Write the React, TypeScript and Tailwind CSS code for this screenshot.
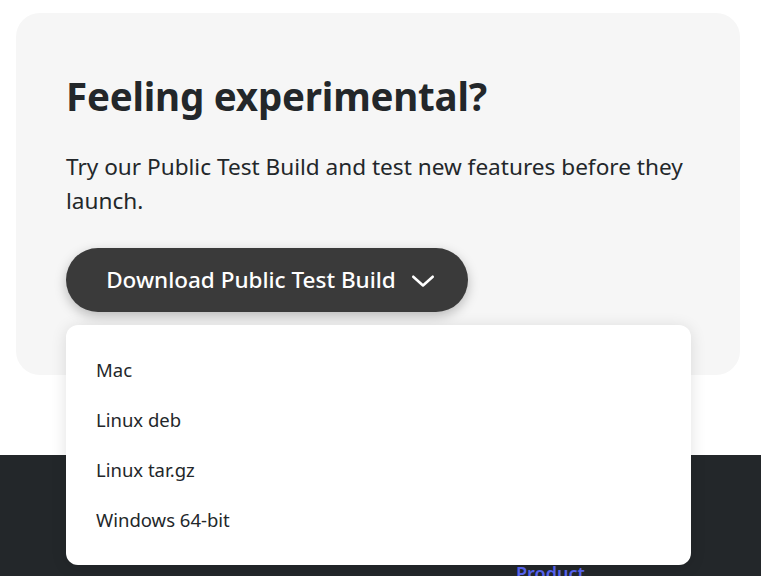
import React from 'react';

const items = ['Mac', 'Linux deb', 'Linux tar.gz', 'Windows 64-bit'];

export default function App() {
  return (
    <div className="relative min-h-[576px] bg-white overflow-hidden" style={{ fontFamily: '"Noto Sans", Inter, sans-serif' }}>
      <div className="pl-4 pr-[21px] pt-[13px]">
        <div className="h-[362px] rounded-3xl bg-[#f6f6f6] pl-[50px] pt-[57px]">
          <h2 className="text-[38.5px] font-bold leading-[52px] text-[#23272a] tracking-[-0.2px]">Feeling experimental?</h2>
          <p className="mt-[28px] text-[22.6px] leading-[34px] text-[#23272a] pr-10">
            Try our Public Test Build and test new features before they launch.
          </p>
          <div className="relative mt-[30px] w-fit">
            <button className="flex h-16 w-[402px] items-center justify-center gap-[14px] rounded-full bg-[#3a3a3a] pl-2 text-[22.5px] font-medium text-white shadow-[0_4px_12px_rgba(0,0,0,0.25)]">
              Download Public Test Build
              <svg width="26" height="26" viewBox="0 0 24 24" fill="none" stroke="white" strokeWidth="2.4" strokeLinecap="round" strokeLinejoin="round">
                <path d="M3 9l9 8 9-8" />
              </svg>
            </button>
            <div className="absolute left-0 top-[77px] z-10 w-[625px] rounded-xl bg-white py-5 shadow-[0_2px_16px_rgba(0,0,0,0.12)]">
              {items.map((item) => (
                <div key={item} className="flex h-[50px] items-center px-[30px] text-[18.5px] text-[#23272a]">
                  {item}
                </div>
              ))}
            </div>
          </div>
        </div>
      </div>
      <div className="mt-20 h-[121px] bg-[#23272a] pl-[516px] pt-[105px]">
        <span className="text-[18px] font-semibold text-[#5865f2]">Product</span>
      </div>
    </div>
  );
}
